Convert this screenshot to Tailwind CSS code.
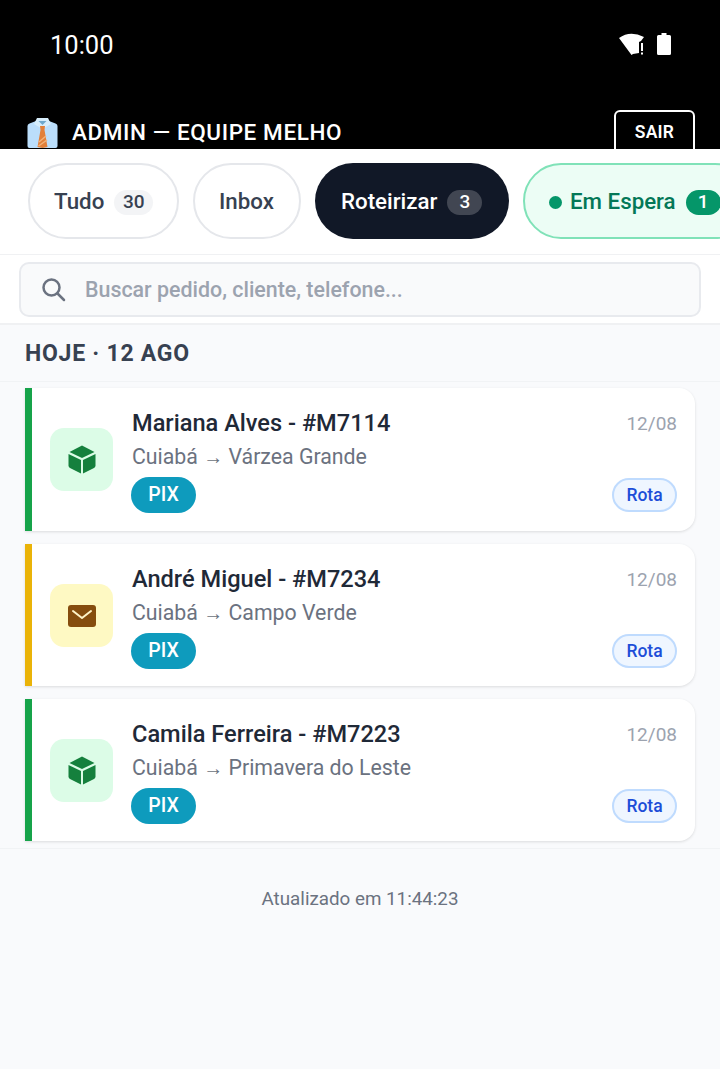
<!DOCTYPE html>
<html lang="en">
<head>
    <meta charset="UTF-8">
    <meta name="viewport" content="width=device-width, initial-scale=1.0">
    <title>Admin - Equipe Melho</title>
    <script src="https://cdn.jsdelivr.net/npm/@tailwindcss/browser@4"></script>
</head>
<body class="bg-[#f9fafc] font-['Roboto',sans-serif]">
<div class="w-[720px] h-[1069px] overflow-hidden flex flex-col">

    <!-- status bar + header -->
    <header class="bg-black h-[149px] overflow-hidden shrink-0 text-white">
        <div class="h-[110px] pl-[50px] pr-[49px] pt-[28px] flex justify-between items-start">
            <span class="text-[25.500px] leading-[34px] font-normal">10:00</span>
            <div class="flex items-center gap-[11px] pt-[4px]">
                <svg width="28" height="24" viewBox="0 0 28 24" fill="#fff">
                    <path d="M1 6 Q12 -2 26 5 L23 9 L21 10 L21 21 L15 22 L13.500 23 Z"/>
                    <rect x="23" y="11" width="2" height="8"/>
                    <rect x="23" y="20.500" width="2" height="2"/>
                </svg>
                <svg width="14" height="22" viewBox="0 0 14 22" fill="#fff">
                    <path d="M4.500 0h5v2h3a1.500 1.500 0 0 1 1.500 1.500v17a1.500 1.500 0 0 1-1.500 1.500h-11a1.500 1.500 0 0 1-1.500-1.500v-17a1.500 1.500 0 0 1 1.500-1.500h3z"/>
                </svg>
            </div>
        </div>
        <div class="flex justify-between items-start pl-[26px] pr-[25px]">
            <div class="flex items-center gap-[13px] pt-[4px]">
                <svg width="33" height="32" viewBox="0 0 33 32" class="shrink-0">
                    <path d="M1.500 10 Q1.500 8 3.500 7.500 L10 5 L23 5 L29.500 7.500 Q31.500 8 31.500 10 L31.500 30 Q31.500 32 29.500 32 L3.500 32 Q1.500 32 1.500 30 Z" fill="#bbdefb"/>
                    <path d="M11 2 L22 2 L25 8 L16.500 13 L8 8 Z" fill="#d6edfb"/>
                    <path d="M12.500 5 L20.500 5 L16.500 9 Z" fill="#6fa8cc"/>
                    <path d="M14 10 L19 10 L18.500 14 L21.500 31 L16.500 32 L11.500 31 L14.500 14 Z" fill="#e2803a"/>
                    <path d="M13 26 L20 20 M12.500 30 L21 24" stroke="#f3b27a" stroke-width="1.500"/>
                </svg>
                <span class="text-[22.500px] leading-[36px] font-medium tracking-[0.6px]">ADMIN — EQUIPE MELHO</span>
            </div>
            <button class="w-[81px] h-[60px] border-2 border-white rounded-[6px] text-[17.500px] font-semibold pb-[15px] tracking-[0.2px]">SAIR</button>
        </div>
    </header>

    <!-- tabs -->
    <nav class="bg-white h-[106px] shrink-0 border-b border-[#f0f1f3] pl-[28px] pt-[14px] flex gap-[14px] overflow-hidden">
        <div class="h-[76px] w-[151px] shrink-0 rounded-full border-2 border-[#e5e7eb] flex items-center pl-[24px] pt-[2px] text-[#374151] text-[22.300px] font-medium">
            Tudo
            <span class="ml-[10px] w-[39px] h-[25px] rounded-full bg-[#f3f4f6] flex items-center justify-center text-[19px]">30</span>
        </div>
        <div class="h-[76px] w-[108px] shrink-0 rounded-full border-2 border-[#e5e7eb] flex items-center justify-center pt-[2px] text-[#374151] text-[22.300px] font-medium pr-[1px]">Inbox</div>
        <div class="h-[76px] w-[194px] shrink-0 rounded-full bg-[#111827] flex items-center pl-[26px] pt-[2px] text-white text-[22.300px] font-medium">
            Roteirizar
            <span class="ml-[10px] w-[35px] h-[25px] rounded-full bg-[#414652] flex items-center justify-center text-[19px]">3</span>
        </div>
        <div class="h-[76px] w-[230px] shrink-0 rounded-full border-2 border-[#80e2b8] bg-[#ecfdf5] flex items-center pl-[24px] pt-[2px] text-[#047857] text-[22.300px] font-medium">
            <span class="w-[13px] h-[13px] rounded-full bg-[#059669] mr-[8px]"></span>
            Em Espera
            <span class="ml-[10px] w-[35px] h-[25px] rounded-full bg-[#059669] text-white flex items-center justify-center text-[19px]">1</span>
        </div>
    </nav>

    <!-- search -->
    <div class="bg-white h-[70px] shrink-0 border-b-2 border-[#f0f1f3] px-[19px] pt-[7px]">
        <div class="h-[55px] rounded-[10px] border-2 border-[#e8eaee] bg-[#f9fafb] flex items-center pl-[20px]">
            <svg width="25" height="25" viewBox="0 0 25 25" fill="none" stroke="#6b7280" stroke-width="2.500" stroke-linecap="round">
                <circle cx="10.500" cy="10.500" r="8"/>
                <path d="M16.500 16.500 L23 23"/>
            </svg>
            <span class="ml-[19px] pt-[2px] text-[21.400px] font-medium text-[#9ca3af]">Buscar pedido, cliente, telefone...</span>
        </div>
    </div>

    <!-- day heading -->
    <div class="h-[57px] shrink-0 border-b border-[#f1f3f5] pl-[25px] pt-[3px] flex items-center text-[#374151] text-[23px] font-bold tracking-[0.75px]">HOJE · 12 AGO</div>

    <!-- orders -->
    <main class="pl-[25px] pr-[25px] pt-[6px] pb-[7px] flex flex-col gap-[13px] border-b border-[#f1f3f5] shrink-0">
        <article class="h-[143px] bg-white border-l-[7px] border-[#16a34a] rounded-r-[16px] shadow-[0_1px_3px_rgba(0,0,0,0.12)] flex pl-[18px] pr-[18px]">
            <div class="w-[63px] h-[63px] mt-[40px] rounded-[14px] bg-[#dcfce7] flex items-center justify-center shrink-0">
                <svg width="28" height="29" viewBox="0 0 28 29" fill="#15803d">
                    <path d="M14 0.500 L26.500 7 L14 13 L1.500 7 Z"/>
                    <path d="M0.500 9 L13 15 L13 28.500 L2 23 Q0.500 22 0.500 20.500 Z"/>
                    <path d="M27.500 9 L15 15 L15 28.500 L26 23 Q27.500 22 27.500 20.500 Z"/>
                </svg>
            </div>
            <div class="ml-[18px] flex-1 pt-[19px]">
                <div class="flex justify-between items-center h-[34px] pl-[1px]">
                    <h2 class="text-[23.600px] font-medium text-[#1f2937]">Mariana Alves - #M7114</h2>
                    <span class="text-[19px] text-[#9ca3af]">12/08</span>
                </div>
                <p class="text-[21.300px] leading-[32px] text-[#6b7280] pl-[1px]">Cuiabá <span class="text-[20px]">→</span> Várzea Grande</p>
                <div class="flex justify-between items-center mt-[4px]">
                    <span class="w-[65px] h-[36px] rounded-full bg-[#0e9bbd] text-white text-[19.500px] font-medium flex items-center justify-center">PIX</span>
                    <span class="w-[65px] h-[34px] rounded-full bg-[#eff6ff] border-2 border-[#bfdbfe] text-[#1d4ed8] text-[17.500px] font-medium flex items-center justify-center">Rota</span>
                </div>
            </div>
        </article>

        <article class="h-[142px] bg-white border-l-[7px] border-[#eab308] rounded-r-[16px] shadow-[0_1px_3px_rgba(0,0,0,0.12)] flex pl-[18px] pr-[18px]">
            <div class="w-[63px] h-[63px] mt-[40px] rounded-[14px] bg-[#fef9c3] flex items-center justify-center shrink-0">
                <svg width="28" height="22" viewBox="0 0 28 22">
                    <rect width="28" height="22" rx="3" fill="#854d0e"/>
                    <path d="M5 6 L14 13 L23 6" fill="none" stroke="#fef3c7" stroke-width="2" stroke-linecap="round" stroke-linejoin="round"/>
                </svg>
            </div>
            <div class="ml-[18px] flex-1 pt-[19px]">
                <div class="flex justify-between items-center h-[34px] pl-[1px]">
                    <h2 class="text-[23.600px] font-medium text-[#1f2937]">André Miguel - #M7234</h2>
                    <span class="text-[19px] text-[#9ca3af]">12/08</span>
                </div>
                <p class="text-[21.300px] leading-[32px] text-[#6b7280] pl-[1px]">Cuiabá <span class="text-[20px]">→</span> Campo Verde</p>
                <div class="flex justify-between items-center mt-[4px]">
                    <span class="w-[65px] h-[36px] rounded-full bg-[#0e9bbd] text-white text-[19.500px] font-medium flex items-center justify-center">PIX</span>
                    <span class="w-[65px] h-[34px] rounded-full bg-[#eff6ff] border-2 border-[#bfdbfe] text-[#1d4ed8] text-[17.500px] font-medium flex items-center justify-center">Rota</span>
                </div>
            </div>
        </article>

        <article class="h-[142px] bg-white border-l-[7px] border-[#16a34a] rounded-r-[16px] shadow-[0_1px_3px_rgba(0,0,0,0.12)] flex pl-[18px] pr-[18px]">
            <div class="w-[63px] h-[63px] mt-[40px] rounded-[14px] bg-[#dcfce7] flex items-center justify-center shrink-0">
                <svg width="28" height="29" viewBox="0 0 28 29" fill="#15803d">
                    <path d="M14 0.500 L26.500 7 L14 13 L1.500 7 Z"/>
                    <path d="M0.500 9 L13 15 L13 28.500 L2 23 Q0.500 22 0.500 20.500 Z"/>
                    <path d="M27.500 9 L15 15 L15 28.500 L26 23 Q27.500 22 27.500 20.500 Z"/>
                </svg>
            </div>
            <div class="ml-[18px] flex-1 pt-[19px]">
                <div class="flex justify-between items-center h-[34px] pl-[1px]">
                    <h2 class="text-[23.600px] font-medium text-[#1f2937]">Camila Ferreira - #M7223</h2>
                    <span class="text-[19px] text-[#9ca3af]">12/08</span>
                </div>
                <p class="text-[21.300px] leading-[32px] text-[#6b7280] pl-[1px]">Cuiabá <span class="text-[20px]">→</span> Primavera do Leste</p>
                <div class="flex justify-between items-center mt-[4px]">
                    <span class="w-[65px] h-[36px] rounded-full bg-[#0e9bbd] text-white text-[19.500px] font-medium flex items-center justify-center">PIX</span>
                    <span class="w-[65px] h-[34px] rounded-full bg-[#eff6ff] border-2 border-[#bfdbfe] text-[#1d4ed8] text-[17.500px] font-medium flex items-center justify-center">Rota</span>
                </div>
            </div>
        </article>
    </main>

    <p class="text-center text-[18.800px] text-[#6b7280] mt-[36px]">Atualizado em 11:44:23</p>
</div>
</body>
</html>
